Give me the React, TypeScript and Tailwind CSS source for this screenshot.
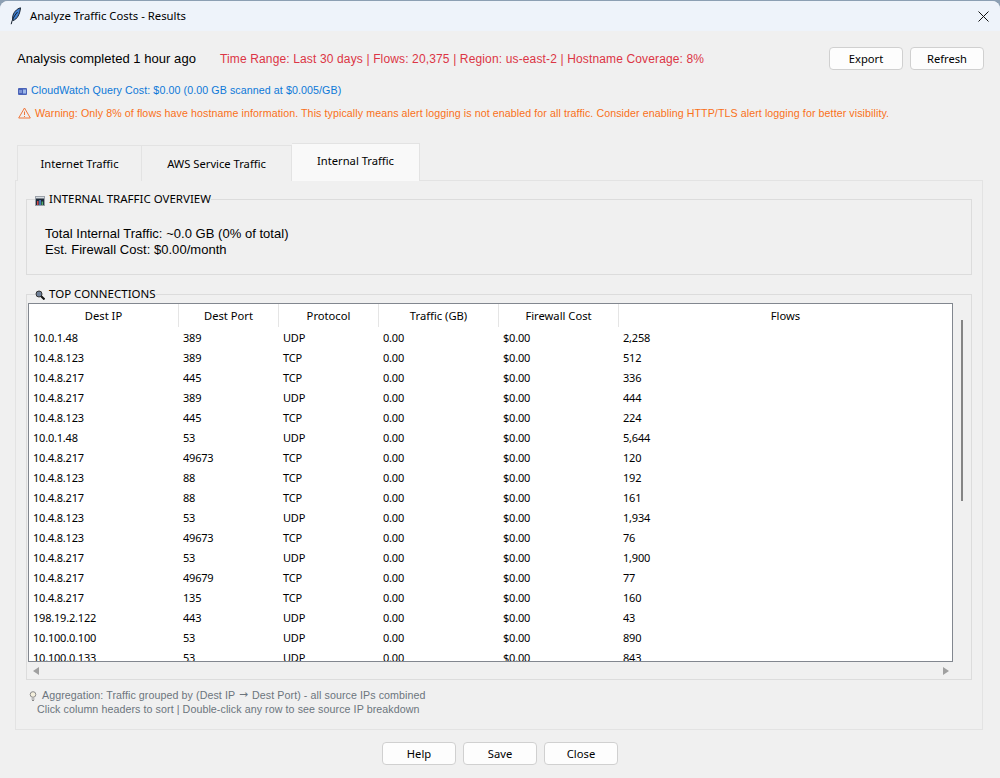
import React from 'react';

const rows = [
  ['10.0.1.48', '389', 'UDP', '2,258'],
  ['10.4.8.123', '389', 'TCP', '512'],
  ['10.4.8.217', '445', 'TCP', '336'],
  ['10.4.8.217', '389', 'UDP', '444'],
  ['10.4.8.123', '445', 'TCP', '224'],
  ['10.0.1.48', '53', 'UDP', '5,644'],
  ['10.4.8.217', '49673', 'TCP', '120'],
  ['10.4.8.123', '88', 'TCP', '192'],
  ['10.4.8.217', '88', 'TCP', '161'],
  ['10.4.8.123', '53', 'UDP', '1,934'],
  ['10.4.8.123', '49673', 'TCP', '76'],
  ['10.4.8.217', '53', 'UDP', '1,900'],
  ['10.4.8.217', '49679', 'TCP', '77'],
  ['10.4.8.217', '135', 'TCP', '160'],
  ['198.19.2.122', '443', 'UDP', '43'],
  ['10.100.0.100', '53', 'UDP', '890'],
  ['10.100.0.133', '53', 'UDP', '843'],
];

const Btn = ({ label }: { label: string }) => (
  <button className="w-[74px] h-[23px] bg-[#fdfdfd] border border-[#d0d0d0] rounded-[4px] text-[11.2px] leading-[20px] text-black">
    {label}
  </button>
);

const Feather = () => (
  <svg width="12" height="18" viewBox="0 0 12 18">
    <path d="M10.500 .8C6.500 2 3.200 5.500 2.700 10c-.2 1.500 -.1 2.500 .3 3.500C7 12.500 10 7 10.500 .8z" fill="#3f7fd0" stroke="#16202e" strokeWidth="1" />
    <path d="M1.200 17.200C2 13 4 9 7.500 5" stroke="#16202e" strokeWidth="1" fill="none" />
  </svg>
);

const Head = ({ w, label }: { w: string; label: string }) => (
  <div className={`${w} h-[23px] pt-[2px] shrink-0 border-r border-[#e5e5e5] flex items-center justify-center text-[11.2px]`}>
    {label}
  </div>
);

function App() {
  return (
    <div className="w-[1000px] h-[778px] overflow-hidden bg-[#8c9fb3] font-['Noto_Sans',sans-serif] text-black">
      <div className="h-full mt-[1px] rounded-t-[8px] overflow-hidden bg-[#f0f0f0] flex flex-col">
        {/* title bar */}
        <div className="h-[30px] shrink-0 bg-[#eef3fa] flex items-center pl-[10px] pr-[10px]">
          <Feather />
          <span className="ml-[8px] text-[11.3px]">Analyze Traffic Costs - Results</span>
          <svg className="ml-auto mr-[1px]" width="11" height="11" viewBox="0 0 11 11">
            <path d="M.5 .5l10 10M10.500 .5l-10 10" stroke="#111" strokeWidth="1" />
          </svg>
        </div>

        {/* summary row */}
        <div className="mt-[16px] h-[23px] flex items-center pl-[17px] pr-[16px] shrink-0">
          <span className="font-['Liberation_Sans',sans-serif] text-[13px] tracking-[0.04px]">Analysis completed 1 hour ago</span>
          <span className="ml-[24px] font-['Liberation_Sans',sans-serif] text-[12px] tracking-[0.14px] text-[#dc3545]">
            Time Range: Last 30 days | Flows: 20,375 | Region: us-east-2 | Hostname Coverage: 8%
          </span>
          <div className="ml-auto flex gap-[7px]">
            <Btn label="Export" />
            <Btn label="Refresh" />
          </div>
        </div>

        <div className="mt-[12px] h-[16px] flex items-center pl-[18px] shrink-0 font-['Liberation_Sans',sans-serif] text-[10.67px] tracking-[0.085px] text-[#0d78d8]">
          <svg width="9" height="7" viewBox="0 0 9 7" className="mr-[4px] mt-[3px]">
            <rect width="9" height="7" rx="1" fill="#4a63b8" />
            <rect x="5" y="1.500" width="3" height="4" fill="#9db8e8" />
            <rect x="1" y="2" width="3" height="3" fill="#7f95d6" />
          </svg>
          CloudWatch Query Cost: $0.00 (0.00 GB scanned at $0.005/GB)
        </div>
        <div className="mt-[7px] h-[16px] flex items-center pl-[18px] shrink-0 font-['Liberation_Sans',sans-serif] text-[10.67px] tracking-[0.08px] text-[#f9701a]">
          <svg width="13" height="12" viewBox="0 0 13 12" className="mr-[4px]">
            <path d="M6.500 1L12.300 11H.7z" fill="none" stroke="#f0763a" strokeWidth="1" />
            <path d="M6.500 4.500v3.500M6.500 9v1" stroke="#f0763a" strokeWidth="1" />
          </svg>
          Warning: Only 8% of flows have hostname information. This typically means alert logging is not enabled for all traffic. Consider enabling HTTP/TLS alert logging for better visibility.
        </div>

        {/* tabs */}
        <div className="mt-[22px] h-[38px] pl-[17px] flex items-end shrink-0 text-[11.2px] relative z-10">
          <div className="w-[125px] h-[36px] pt-[2px] bg-[#f0f0f0] border border-[#e3e3e3] border-b-0 flex items-center justify-center">Internet Traffic</div>
          <div className="w-[150px] h-[36px] pt-[2px] bg-[#f0f0f0] border border-[#e3e3e3] border-b-0 border-l-0 flex items-center justify-center">AWS Service Traffic</div>
          <div className="w-[128px] h-[38px] bg-[#f9f9f9] border border-[#e3e3e3] border-b-0 border-l-0 flex items-center justify-center pb-[2px]">Internal Traffic</div>
        </div>

        {/* notebook panel */}
        <div className="mx-[15px] w-[968px] h-[550px] -mt-[1px] border border-[#e3e3e3] px-[10px] pt-[10px] shrink-0">
          <fieldset className="h-[84px] border border-[#dcdcdc]">
            <legend className="ml-[8px] flex items-center text-[11.5px] leading-[16px]">
              <svg width="10" height="10" viewBox="0 0 10 10" className="mr-[4px] mt-[3px]">
                <rect x=".5" y=".5" width="9" height="9" fill="#1f2a38" stroke="#9aa0a8" />
                <rect x="1" y="1" width="8" height="1.500" fill="#d8dde2" />
                <rect x="2" y="5" width="1.500" height="4" fill="#d04a4a" />
                <rect x="4.300" y="4" width="1.500" height="5" fill="#4a8ad8" />
                <rect x="6.600" y="5.500" width="1.500" height="3.500" fill="#4fae6a" />
              </svg>
              INTERNAL TRAFFIC OVERVIEW
            </legend>
            <div className="pl-[18px] pt-[19px] font-['Liberation_Sans',sans-serif] text-[13px] tracking-[0.03px] leading-[16px]">
              <div>Total Internal Traffic: ~0.0 GB (0% of total)</div>
              <div>Est. Firewall Cost: $0.00/month</div>
            </div>
          </fieldset>

          <fieldset className="mt-[11px] h-[394px] border border-[#dcdcdc]">
            <legend className="ml-[8px] flex items-center text-[11.5px] leading-[16px]">
              <svg width="10" height="10" viewBox="0 0 10 10" className="mr-[4px] mt-[2px]">
                <circle cx="4" cy="4" r="3" fill="#6f8098" stroke="#333" />
                <path d="M6.200 6.200l3.300 3.300" stroke="#111" strokeWidth="2" />
              </svg>
              TOP CONNECTIONS
            </legend>
            <div className="relative mt-[1px] ml-[1px]">
              <div className="w-[925px] h-[359px] border border-[#82878f] bg-white overflow-hidden">
                <div className="flex">
                  <Head w="w-[150px]" label="Dest IP" />
                  <Head w="w-[100px]" label="Dest Port" />
                  <Head w="w-[100px]" label="Protocol" />
                  <Head w="w-[120px]" label="Traffic (GB)" />
                  <Head w="w-[120px]" label="Firewall Cost" />
                  <div className="flex-1 h-[23px] pt-[2px] flex items-center justify-center text-[11.2px]">Flows</div>
                </div>
                {rows.map((r, i) => (
                  <div key={i} className="flex h-[20px] items-center text-[11px] tracking-[-0.2px] pt-[3px]">
                    <div className="w-[150px] pl-[4px] shrink-0">{r[0]}</div>
                    <div className="w-[100px] pl-[4px] shrink-0">{r[1]}</div>
                    <div className="w-[100px] pl-[4px] shrink-0">{r[2]}</div>
                    <div className="w-[120px] pl-[4px] shrink-0">0.00</div>
                    <div className="w-[120px] pl-[4px] shrink-0">$0.00</div>
                    <div className="pl-[4px]">{r[3]}</div>
                  </div>
                ))}
              </div>
              {/* vertical scrollbar thumb */}
              <div className="absolute left-[933px] top-[17px] w-[2px] h-[181px] bg-[#858585]" />
              {/* horizontal scrollbar arrows */}
              <div className="h-[17px] flex items-center justify-between pl-[5px] pr-[4px] w-[925px]">
                <svg width="6" height="8" viewBox="0 0 6 8"><path d="M6 0v8L0 4z" fill="#a0a0a0" /></svg>
                <svg width="6" height="8" viewBox="0 0 6 8"><path d="M0 0v8l6-4z" fill="#a0a0a0" /></svg>
              </div>
            </div>
          </fieldset>

          <div className="mt-[8px] pl-[4px] font-['Liberation_Sans',sans-serif] text-[10.67px] tracking-[0.08px] leading-[14px] text-[#6c757d]">
            <div className="flex items-center whitespace-pre">
              <svg width="8" height="10" viewBox="0 0 8 10" className="mr-[5px] ml-[-1px] mt-[2px]">
                <circle cx="4" cy="3.500" r="2.800" fill="#f4efdc" stroke="#8a8a8a" />
                <path d="M2.500 8h3M3 9.500h2" stroke="#8a8a8a" />
              </svg>
              Aggregation: Traffic grouped by (Dest IP <span className="font-['DejaVu_Sans',sans-serif] mx-[1px]">→</span> Dest Port) - all source IPs combined
            </div>
            <div className="pl-[7px]">Click column headers to sort | Double-click any row to see source IP breakdown</div>
          </div>
        </div>

        {/* footer buttons */}
        <div className="mt-[12px] flex justify-center gap-[7px] shrink-0">
          <Btn label="Help" />
          <Btn label="Save" />
          <Btn label="Close" />
        </div>
      </div>
    </div>
  );
}

export default App;
